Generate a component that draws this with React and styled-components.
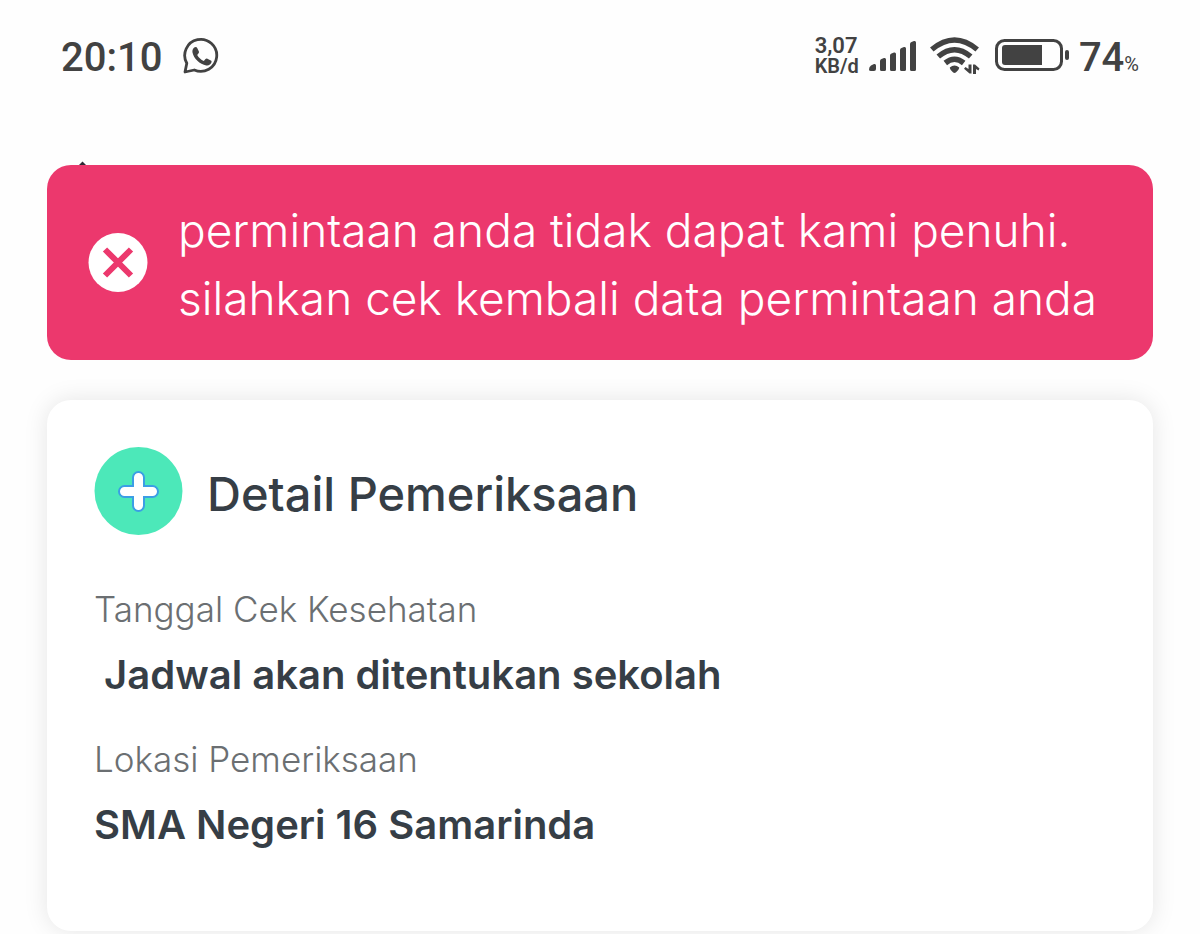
import React from "react";
import styled, { createGlobalStyle } from "styled-components";

const GlobalStyle = createGlobalStyle`
  *, *::before, *::after { box-sizing: border-box; }
  body {
    margin: 0;
    background: #fefefe;
    color: #363e46;
    font-family: Inter, "Liberation Sans", sans-serif;
  }
  h1, p, dl, dt, dd { margin: 0; }
`;

const StatusBar = styled.header`
  display: flex;
  justify-content: space-between;
  align-items: center;
  height: 112px;
  padding: 0 61px;
  color: #424242;
  font-family: Roboto, "Liberation Sans", sans-serif;
  font-weight: 500;
`;

const StatusGroup = styled.div`
  display: flex;
  align-items: center;
  gap: ${({ $gap }) => $gap}px;
`;

const StatusText = styled.span`
  display: flex;
  align-items: baseline;
  padding-top: 4px;
  font-size: 40px;
  line-height: 48px;
`;

const Percent = styled.small`
  font-size: 20px;
  font-weight: 400;
  line-height: 20px;
`;

const NetworkSpeed = styled.span`
  display: flex;
  flex-direction: column;
  font-weight: 600;
  line-height: 20px;
`;

const SpeedText = styled.span`
  font-size: ${({ $size }) => $size}px;
`;

const Icon = styled.svg`
  display: block;
  flex: none;
`;

const NavBar = styled.nav`
  height: 53px;
  padding: 49px 77px 0;
  color: #2f2a35;
`;

const Main = styled.main`
  display: flex;
  flex-direction: column;
  gap: 40px;
  padding: 0 47px 3px;
`;

const Toast = styled.div`
  display: flex;
  align-items: center;
  gap: 30px;
  min-height: 195px;
  padding: 28px 36px 28px 41px;
  border-radius: 24px;
  background: #ec386d;
  color: #fff;
`;

const ToastText = styled.p`
  padding-top: 3px;
  font-size: 46px;
  font-weight: 300;
  line-height: 68px;
`;

const Card = styled.section`
  min-height: 531px;
  padding: 47px;
  border-radius: 24px;
  background: #fff;
  box-shadow: 0 0 24px rgba(0, 0, 0, 0.1);
`;

const CardHeader = styled.div`
  display: flex;
  align-items: center;
  gap: 24px;
`;

const CardTitle = styled.h1`
  padding-top: 4px;
  font-size: 47px;
  font-weight: 500;
  line-height: 64px;
`;

const Details = styled.dl`
  display: flex;
  flex-direction: column;
  gap: 28px;
  padding-top: 47px;
`;

const Label = styled.dt`
  color: #6b6f72;
  font-size: 35px;
  font-weight: 300;
  line-height: 52px;
`;

const Value = styled.dd`
  padding-top: 10px;
  font-size: 40px;
  font-weight: 600;
  line-height: 60px;
  white-space: pre-wrap;
`;

function WhatsAppIcon() {
  return (
    <Icon width="38" height="38" viewBox="0 0 38 38" aria-label="WhatsApp" role="img">
      <path
        d="M3 35 L4.8 26.2 A16 16 0 1 1 12.3 33 Z"
        fill="none"
        stroke="currentColor"
        strokeWidth="2.8"
        strokeLinejoin="round"
      />
      <path
        d="M12.2 10.6c1-.8 2.500-.8 3 .3l1.700 3.600c.3.800.1 1.500-.5 2.100l-1.200 1.400c1.600 2.800 3.800 4.800 6.600 6l1.700-1.900c.5-.6 1.200-.7 1.900-.4l3.400 1.700c.8.400.9 1 .7 1.900-.6 2.300-2.900 3.500-5.200 3.100-6.700-1.200-12.500-6.600-13.800-12.900-.4-1.900.3-3.800 1.700-4.900z"
        fill="currentColor"
      />
    </Icon>
  );
}

function SignalIcon() {
  return (
    <Icon width="48" height="32" viewBox="0 0 48 32" fill="currentColor" aria-label="Sinyal" role="img">
      <path d="M0 29.500 Q0 27 2 25.500 L5 24 Q7 23.500 7 25.500 V29 Q7 31 5 31 H2 Q0 31 0 29.500Z" />
      <path d="M11 21 Q11 19.500 12.500 19 L15 18 Q17 17.500 17 19.500 V29.500 Q17 31 15.500 31 H12.500 Q11 31 11 29.500Z" />
      <path d="M21 15.500 Q21 14 22.500 13.500 L25 12.500 Q27 12 27 14 V29.500 Q27 31 25.500 31 H22.500 Q21 31 21 29.500Z" />
      <path d="M31 10 Q31 8.500 32.500 8 L35 7 Q37 6.500 37 8.500 V29.500 Q37 31 35.500 31 H32.500 Q31 31 31 29.500Z" />
      <path d="M41 4 Q41 2.500 42.500 2 L45 1 Q47 .5 47 2.500 V29.500 Q47 31 45.500 31 H42.500 Q41 31 41 29.500Z" />
    </Icon>
  );
}

function WifiIcon() {
  return (
    <Icon width="58" height="40" viewBox="-3 0 58 40" aria-label="Wi-Fi" role="img">
      <g fill="none" stroke="currentColor" strokeWidth="5.500">
        <path d="M1.800 13.500 Q24.500 -5.500 47.200 13.500" />
        <path d="M8.300 20.500 Q24.500 7 40.700 20.500" />
        <path d="M15.300 27 Q24.500 19.500 33.700 27" />
      </g>
      <path
        d="M19.800 31.500 Q24.500 27.500 29.200 31.500 Q29.300 33.500 25.800 36.600 Q24.500 37.500 23.200 36.600 Q19.700 33.500 19.800 31.500Z"
        fill="currentColor"
      />
      <path
        d="M38.500 28.500 H41.500 V37.500 H39.500 L34 32.800 L35.500 31 L38.500 33Z M43 38 V28.500 H45 L49.500 32.500 L48.500 34.500 L46 33 V38Z"
        fill="currentColor"
      />
    </Icon>
  );
}

function BatteryIcon() {
  return (
    <Icon width="74" height="34" viewBox="0 0 74 34" aria-label="Baterai" role="img">
      <rect x="1.500" y="1.500" width="65" height="29" rx="8" fill="none" stroke="currentColor" strokeWidth="3" />
      <path d="M10 6 H47 V26 H10 Q7 26 7 23 V9 Q7 6 10 6Z" fill="currentColor" />
      <rect x="70" y="11" width="4" height="10" rx="2" fill="currentColor" />
    </Icon>
  );
}

function BackIcon() {
  return (
    <Icon width="12" height="4" viewBox="0 0 12 4" aria-hidden="true">
      <path d="M2 4 L5.500 .5 L9 4Z" fill="currentColor" />
    </Icon>
  );
}

function ErrorIcon() {
  return (
    <Icon width="60" height="60" viewBox="0 0 60 60" aria-hidden="true">
      <circle cx="30" cy="29.500" r="29.500" fill="#fff" />
      <path d="M17 16.500 L43 42.500 M43 16.500 L17 42.500" stroke="#ec386d" strokeWidth="6" />
    </Icon>
  );
}

function MedicalIcon() {
  return (
    <Icon width="89" height="89" viewBox="0 0 89 89" aria-hidden="true">
      <circle cx="44.500" cy="44" r="44" fill="#4ce8b9" />
      <g strokeLinecap="round">
        <path d="M44.500 30.500 V58.500 M30.500 44.500 H58.500" stroke="#3b9ee5" strokeWidth="13" />
        <path d="M44.500 30.500 V58.500 M30.500 44.500 H58.500" stroke="#fff" strokeWidth="9" />
      </g>
    </Icon>
  );
}

function DetailItem({ label, value }) {
  return (
    <div>
      <Label>{label}</Label>
      <Value>{value}</Value>
    </div>
  );
}

export default function App() {
  return (
    <>
      <GlobalStyle />
      <StatusBar>
        <StatusGroup $gap={20}>
          <StatusText>20:10</StatusText>
          <WhatsAppIcon />
        </StatusGroup>
        <StatusGroup $gap={10}>
          <NetworkSpeed>
            <SpeedText $size={22}>3,07</SpeedText>
            <SpeedText $size={20}>KB/d</SpeedText>
          </NetworkSpeed>
          <SignalIcon />
          <WifiIcon />
          <BatteryIcon />
          <StatusText>
            74<Percent>%</Percent>
          </StatusText>
        </StatusGroup>
      </StatusBar>
      <NavBar>
        <BackIcon />
      </NavBar>
      <Main>
        <Toast role="alert">
          <ErrorIcon />
          <ToastText>
            permintaan anda tidak dapat kami penuhi.
            <br />
            silahkan cek kembali data permintaan anda
          </ToastText>
        </Toast>
        <Card>
          <CardHeader>
            <MedicalIcon />
            <CardTitle>Detail Pemeriksaan</CardTitle>
          </CardHeader>
          <Details>
            <DetailItem label="Tanggal Cek Kesehatan" value=" Jadwal akan ditentukan sekolah" />
            <DetailItem label="Lokasi Pemeriksaan" value="SMA Negeri 16 Samarinda" />
          </Details>
        </Card>
      </Main>
    </>
  );
}
